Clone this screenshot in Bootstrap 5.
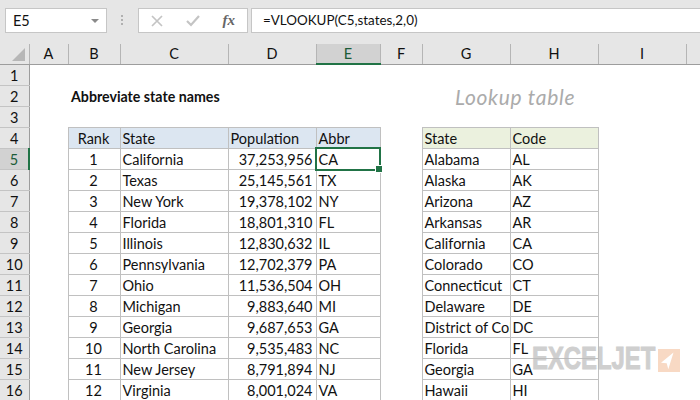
<!DOCTYPE html>
<html lang="en">
<head>
  <meta charset="UTF-8" />
  <title>Abbreviate state names</title>
  <link href="https://cdn.jsdelivr.net/npm/bootstrap@5.3.0/dist/css/bootstrap.min.css" rel="stylesheet" />
  <style>
    html, body { height: 400px; overflow: hidden; }
    body { background: #fff; font-family: "Lato", "Liberation Sans", sans-serif; font-size: 14.5px; color: #111; }
    .xl-top { height: 44px; background: #e6e6e6; padding: 8px 0 11px 5px; }
    .xl-box { background: #fff; border: 1px solid #c6c6c6; height: 25px; }
    .xl-name { width: 102px; padding-left: 7px; }
    .xl-caret { width: 0; height: 0; border-left: 4px solid transparent; border-right: 4px solid transparent; border-top: 4px solid #8a8a8a; margin-right: 7px; }
    .xl-dots { width: 31px; color: #aaa; }
    .xl-fx { width: 110px; padding: 0 12px; }
    .xl-fxt { font-family: "Liberation Serif", serif; font-style: italic; font-weight: bold; font-size: 15px; color: #666; }
    .xl-input { margin-left: 3px; flex-grow: 1; padding-left: 11px; border-right: 0; font-size: 13.4px; }
    .xl-sheet { table-layout: fixed; border-collapse: collapse; width: 700px; }
    .xl-sheet td, .xl-sheet th { height: 21px; padding: 1px 3px 0 2px; line-height: 19px; white-space: nowrap; overflow: hidden; font-weight: normal; }
    .xl-head th { height: 20px; background: #e6e6e6; text-align: center; border-right: 1px solid #b5b5b5; border-bottom: 1px solid #9d9d9d; padding: 0; }
    .xl-head th.xl-on { background: #d2d2d2; border-bottom: 2px solid #217346; color: #1c5c38; }
    .xl-head th.xl-all { position: relative; }
    .xl-corner { position: absolute; right: 4px; bottom: 3px; width: 0; height: 0; border-left: 13px solid transparent; border-bottom: 13px solid #b7b7b7; }
    .xl-sheet th.xl-rn { background: #e6e6e6; text-align: center; border-right: 1px solid #9d9d9d; border-bottom: 1px solid #c4c4c4; padding: 1px 0 0; }
    .xl-sheet th.xl-rn.xl-on { background: #d2d2d2; border-right: 2px solid #217346; color: #1c5c38; }
    .xl-sheet td.xl-b { border: 1px solid #c0c0c0; }
    .xl-sheet td.xl-blue { background: #dce6f1; }
    .xl-sheet td.xl-green { background: #ebf1de; }
    .xl-sheet td.xl-title { font-weight: bold; font-size: 14.2px; overflow: visible; padding-left: 3px; }
    .xl-sheet td.xl-hand { font-style: italic; font-size: 21px; letter-spacing: .7px; color: #ababab; padding-left: 33px; overflow: visible; }
    .xl-sheet td.xl-sel { position: relative; overflow: visible; }
    .xl-pick { position: absolute; left: -2px; top: -2px; right: -1px; bottom: -2px; border: 2px solid #217346; }
    .xl-grip { position: absolute; right: -4px; bottom: -4px; width: 6px; height: 6px; background: #217346; border: 1px solid #fff; box-sizing: content-box; }
    .xl-mark { position: absolute; left: 532px; top: 349px; height: 23px; }
    .xl-wordbox { width: 126px; }
    .xl-word { display: inline-block; font-family: "Liberation Sans", sans-serif; font-weight: bold; font-size: 31px; line-height: 23px; color: #bbb; opacity: .7; transform: scaleX(.77); transform-origin: left center; -webkit-text-stroke: 1px #bbb; }
    .xl-flag { width: 22px; height: 23px; background: #f8d9c4; }
  </style>
</head>
<body>
  <div class="xl-top d-flex align-items-center">
    <div class="xl-box xl-name d-flex align-items-center justify-content-between">
      <span>E5</span><span class="xl-caret"></span>
    </div>
    <div class="xl-dots d-flex justify-content-center">
      <svg width="3" height="13" viewBox="0 0 3 13" fill="#b0b0b0"><rect width="2" height="2" y="1"/><rect width="2" height="2" y="5"/><rect width="2" height="2" y="9"/></svg>
    </div>
    <div class="xl-box xl-fx d-flex align-items-center justify-content-between">
      <svg width="12" height="12" viewBox="0 0 12 12" fill="none" stroke="#c4c4c4" stroke-width="1.7"><path d="M1 1l10 10M11 1L1 11"/></svg>
      <svg width="14" height="12" viewBox="0 0 14 12" fill="none" stroke="#c4c4c4" stroke-width="2.2"><path d="M1 6l4 4 8-9"/></svg>
      <span class="xl-fxt">fx</span>
    </div>
    <div class="xl-box xl-input d-flex align-items-center">=VLOOKUP(C5,states,2,0)</div>
  </div>
  <table class="xl-sheet" id="sheet">
    <colgroup>
      <col style="width:29px"><col style="width:39px"><col style="width:52px"><col style="width:108px"><col style="width:88px"><col style="width:64px"><col style="width:42px"><col style="width:88px"><col style="width:88px"><col style="width:88px"><col style="width:14px">
    </colgroup>
    <thead>
      <tr class="xl-head">
        <th class="xl-all"><span class="xl-corner"></span></th>
        <th>A</th><th>B</th><th>C</th><th>D</th><th class="xl-on">E</th><th>F</th><th>G</th><th>H</th><th>I</th><th></th>
      </tr>
    </thead>
    <tbody id="rows"></tbody>
  </table>
  <div class="xl-mark d-flex align-items-center">
    <div class="xl-wordbox"><span class="xl-word">EXCELJET</span></div>
    <span class="xl-flag d-flex">
      <svg width="22" height="23" viewBox="0 0 22 23"><path d="M15.5 3.5L3 13.7l5.7.6 1.6 6z" fill="#fff"/></svg>
    </span>
  </div>
  <script>
    const main = [
      ['1','California','37,253,956','CA'],['2','Texas','25,145,561','TX'],['3','New York','19,378,102','NY'],
      ['4','Florida','18,801,310','FL'],['5','Illinois','12,830,632','IL'],['6','Pennsylvania','12,702,379','PA'],
      ['7','Ohio','11,536,504','OH'],['8','Michigan','9,883,640','MI'],['9','Georgia','9,687,653','GA'],
      ['10','North Carolina','9,535,483','NC'],['11','New Jersey','8,791,894','NJ'],['12','Virginia','8,001,024','VA']
    ];
    const lookup = [
      ['Alabama','AL'],['Alaska','AK'],['Arizona','AZ'],['Arkansas','AR'],['California','CA'],['Colorado','CO'],
      ['Connecticut','CT'],['Delaware','DE'],['District of Columbia','DC'],['Florida','FL'],['Georgia','GA'],['Hawaii','HI']
    ];
    const rowHead = n => `<th class="xl-rn${n === 5 ? ' xl-on' : ''}">${n}</th>`;
    let html = '';
    html += `<tr>${rowHead(1)}<td colspan="10"></td></tr>`;
    html += `<tr>${rowHead(2)}<td></td><td colspan="3" class="xl-title">Abbreviate state names</td><td></td><td></td><td colspan="2" class="xl-hand">Lookup table</td><td colspan="2"></td></tr>`;
    html += `<tr>${rowHead(3)}<td colspan="10"></td></tr>`;
    html += `<tr>${rowHead(4)}<td></td><td class="xl-b xl-blue text-center">Rank</td><td class="xl-b xl-blue">State</td><td class="xl-b xl-blue">Population</td><td class="xl-b xl-blue">Abbr</td><td></td><td class="xl-b xl-green">State</td><td class="xl-b xl-green">Code</td><td colspan="2"></td></tr>`;
    main.forEach((m, i) => {
      const sel = i === 0;
      html += `<tr>${rowHead(i + 5)}<td></td>
        <td class="xl-b text-center">${m[0]}</td><td class="xl-b">${m[1]}</td><td class="xl-b text-end">${m[2]}</td>
        <td class="xl-b${sel ? ' xl-sel' : ''}">${m[3]}${sel ? '<span class="xl-pick"><span class="xl-grip"></span></span>' : ''}</td>
        <td></td><td class="xl-b">${lookup[i][0]}</td><td class="xl-b">${lookup[i][1]}</td><td colspan="2"></td></tr>`;
    });
    document.getElementById('rows').innerHTML = html;
  </script>
  <script src="https://cdn.jsdelivr.net/npm/bootstrap@5.3.0/dist/js/bootstrap.bundle.min.js"></script>
</body>
</html>
